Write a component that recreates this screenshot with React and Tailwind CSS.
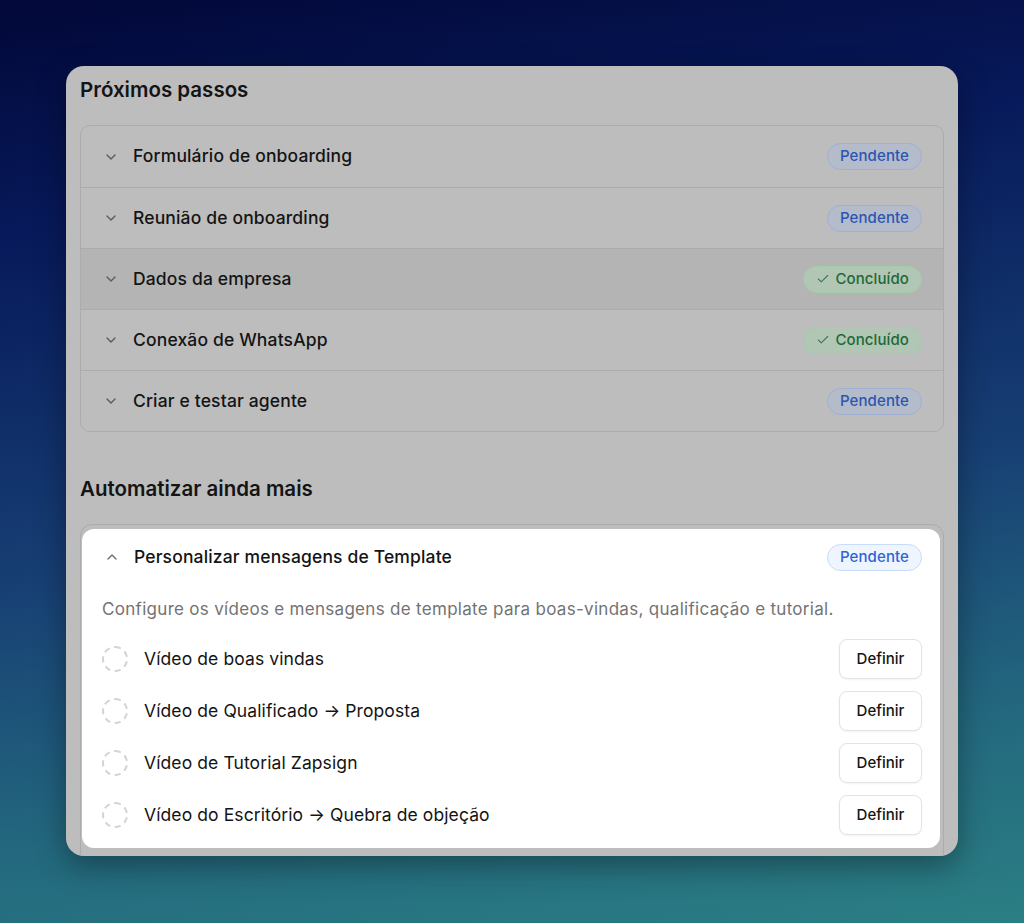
import React from 'react';
import { ChevronDown, ChevronUp, Check } from 'lucide-react';

const steps = [
  { title: 'Formulário de onboarding', done: false },
  { title: 'Reunião de onboarding', done: false },
  { title: 'Dados da empresa', done: true, active: true },
  { title: 'Conexão de WhatsApp', done: true },
  { title: 'Criar e testar agente', done: false },
];

const videos = [
  'Vídeo de boas vindas',
  'Vídeo de Qualificado → Proposta',
  'Vídeo de Tutorial Zapsign',
  'Vídeo do Escritório → Quebra de objeção',
];

const DimBadge = ({ done }) =>
  done ? (
    <span className="flex items-center gap-[5px] h-[27px] px-[12px] rounded-full border border-[#9fcea9] bg-[#b2c6b6] text-[#1d6a34] text-[15px] font-medium tracking-[0.1px]">
      <Check size={14} strokeWidth={2} className="text-[#3f7a50]" />
      Concluído
    </span>
  ) : (
    <span className="flex items-center h-[27px] px-[12px] rounded-full border border-[#9fb0d2] bg-[#b4bccb] text-[#2c55b2] text-[15px] font-medium tracking-[0.1px]">
      Pendente
    </span>
  );

const App = () => {
  return (
    <div
      className="w-[1024px] h-[923px] overflow-hidden bg-[linear-gradient(172deg,#020838_0%,#07195a_22%,#173f74_55%,#23687e_80%,#2b7f84_100%)] pt-[66px] pl-[66px]"
      style={{ fontFamily: 'Inter, "Noto Sans", sans-serif' }}
    >
      <div className="w-[892px] h-[790px] overflow-hidden rounded-[18px] bg-[#bdbdbd] shadow-[0_10px_30px_rgba(0,0,0,0.35)] px-[14px] pt-[12px]">
        <h2 className="text-[20.5px] leading-[24px] font-semibold text-[#141414]">Próximos passos</h2>

        <div className="mt-[23px] rounded-[10px] border border-[#acacac] overflow-hidden">
          {steps.map((s, i) => (
            <div
              key={s.title}
              className={`flex items-center justify-between h-[61px] pl-[22px] pr-[21px] ${i > 0 ? 'border-t border-[#acacac]' : ''} ${s.active ? 'bg-[#b4b4b4]' : ''}`}
            >
              <div className="flex items-center gap-[14px]">
                <ChevronDown size={16} strokeWidth={2} className="text-[#5a5a5a]" />
                <span className="text-[17.5px] font-medium tracking-[0.15px] text-[#141414]">{s.title}</span>
              </div>
              <DimBadge done={s.done} />
            </div>
          ))}
        </div>

        <h2 className="mt-[45px] text-[20.5px] leading-[24px] font-semibold text-[#141414]">Automatizar ainda mais</h2>

        <div className="mt-[23px] rounded-[12px] border border-[#acacac] pt-[4px] pl-[1px] pr-[3px] pb-[20px]">
          <div className="rounded-[12px] bg-white pl-[20px] pr-[18px] pb-[13px]">
            <div className="flex items-center justify-between h-[56px]">
              <div className="flex items-center gap-[14px] pl-[2px]">
                <ChevronUp size={16} strokeWidth={2} className="text-[#6b6b6b]" />
                <span className="text-[17.5px] font-medium tracking-[0.15px] text-[#141414]">Personalizar mensagens de Template</span>
              </div>
              <span className="flex items-center h-[27px] px-[12px] rounded-full border border-[#c7dcf7] bg-[#eef5ff] text-[#2f63d6] text-[15px] font-medium tracking-[0.1px]">
                Pendente
              </span>
            </div>
            <p className="mt-[13px] text-[17px] leading-[22px] tracking-[0.3px] text-[#737373]">
              Configure os vídeos e mensagens de template para boas-vindas, qualificação e tutorial.
            </p>
            <div className="mt-[19px] flex flex-col gap-[12px]">
              {videos.map((v) => (
                <div key={v} className="flex items-center justify-between h-[40px]">
                  <div className="flex items-center gap-[16px]">
                    <span className="w-[26px] h-[26px] rounded-full border-2 border-dashed border-[#d4d4d4]" />
                    <span className="text-[17.5px] tracking-[0.1px] text-[#141414]">{v}</span>
                  </div>
                  <button className="h-[40px] w-[83px] rounded-[8px] border border-[#e3e3e3] bg-white shadow-[0_1px_2px_rgba(0,0,0,0.05)] text-[15px] font-medium text-[#141414]">
                    Definir
                  </button>
                </div>
              ))}
            </div>
          </div>
        </div>
      </div>
    </div>
  );
};

export default App;
